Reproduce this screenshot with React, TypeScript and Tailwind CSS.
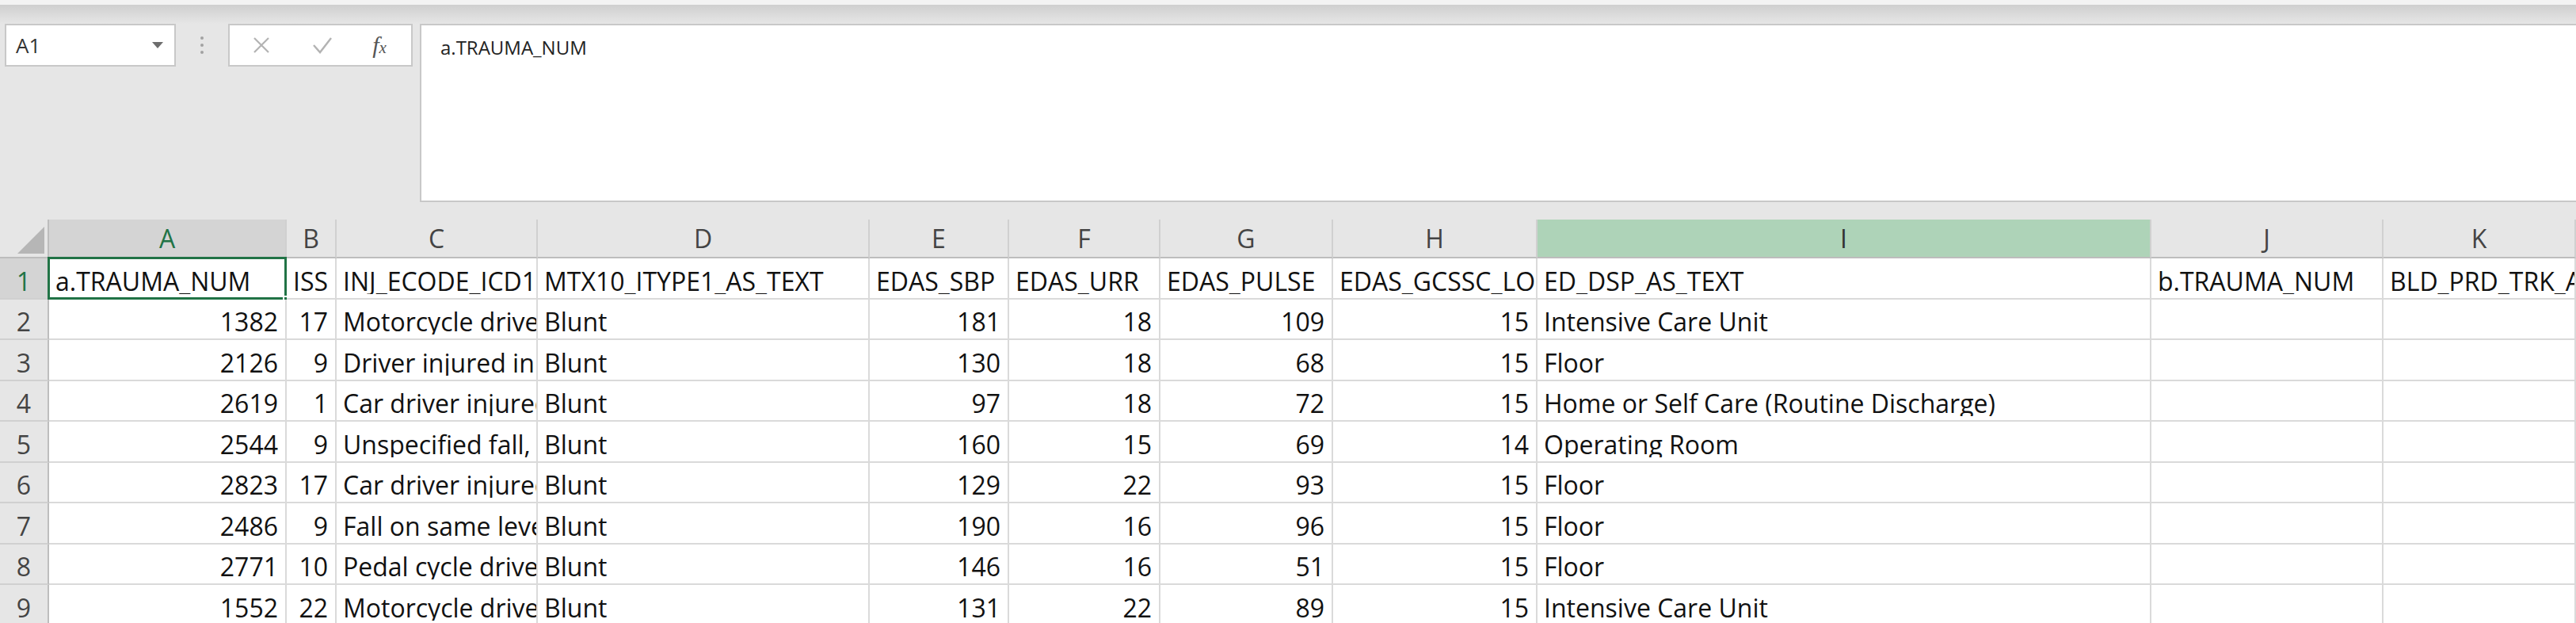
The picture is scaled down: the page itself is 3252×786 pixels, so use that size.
import React from "react";

type Column = {
  letter: string;
  width: string;
};

const columns: Column[] = [
  { letter: "A", width: "w-[300px]" },
  { letter: "B", width: "w-[63px]" },
  { letter: "C", width: "w-[254px]" },
  { letter: "D", width: "w-[419px]" },
  { letter: "E", width: "w-[176px]" },
  { letter: "F", width: "w-[191px]" },
  { letter: "G", width: "w-[218px]" },
  { letter: "H", width: "w-[258px]" },
  { letter: "I", width: "w-[775px]" },
  { letter: "J", width: "w-[293px]" },
  { letter: "K", width: "w-[243px]" },
];

const headerRow = [
  "a.TRAUMA_NUM",
  "ISS",
  "INJ_ECODE_ICD10_AS_TEXT",
  "MTX10_ITYPE1_AS_TEXT",
  "EDAS_SBP",
  "EDAS_URR",
  "EDAS_PULSE",
  "EDAS_GCSSC_LOC",
  "ED_DSP_AS_TEXT",
  "b.TRAUMA_NUM",
  "BLD_PRD_TRK_AS_TEXT",
];

const rows: string[][] = [
  ["1382", "17", "Motorcycle driver injured in collision", "Blunt", "181", "18", "109", "15", "Intensive Care Unit", "", ""],
  ["2126", "9", "Driver injured in collision", "Blunt", "130", "18", "68", "15", "Floor", "", ""],
  ["2619", "1", "Car driver injured in collision", "Blunt", "97", "18", "72", "15", "Home or Self Care (Routine Discharge)", "", ""],
  ["2544", "9", "Unspecified fall, initial encounter", "Blunt", "160", "15", "69", "14", "Operating Room", "", ""],
  ["2823", "17", "Car driver injured in collision", "Blunt", "129", "22", "93", "15", "Floor", "", ""],
  ["2486", "9", "Fall on same level from slipping", "Blunt", "190", "16", "96", "15", "Floor", "", ""],
  ["2771", "10", "Pedal cycle driver injured", "Blunt", "146", "16", "51", "15", "Floor", "", ""],
  ["1552", "22", "Motorcycle driver injured in collision", "Blunt", "131", "22", "89", "15", "Intensive Care Unit", "", ""],
];

const rowHeights = ["h-[49px]", "h-[52px]", "h-[51px]", "h-[52px]", "h-[51px]", "h-[52px]", "h-[51px]", "h-[52px]", "h-[51px]", "h-[52px]"];

const App = () => {
  const renderColumnHeader = (col: Column) => {
    // selected column gets the darker fill, I is highlighted green
    let look = "bg-[#e6e6e6] text-[#444] border-b-2 border-b-[#bdbdbd]";
    if (col.letter === "A") look = "bg-[#d4d4d4] text-[#217346] border-b-2 border-b-[#217346]";
    if (col.letter === "I") look = "bg-[#aed3b8] text-[#333] border-b-2 border-b-[#bdbdbd]";
    return (
      <div
        key={col.letter}
        className={`${col.width} ${look} flex shrink-0 items-center justify-center border-r-2 border-r-[#d0d0d0]`}
      >
        {col.letter}
      </div>
    );
  };

  const renderCell = (col: Column, value: string, rowIndex: number) => {
    const isNumber = /^\d+$/.test(value);
    const isActive = rowIndex === 1 && col.letter === "A";
    return (
      <div
        key={col.letter}
        className={`${col.width} relative flex shrink-0 items-end border-r-2 border-b-2 border-[#dadada] bg-white pb-[5px] ${
          isNumber ? "justify-end pr-[9px]" : "justify-start pl-[8px]"
        }`}
      >
        <span className={`block w-full overflow-hidden whitespace-nowrap ${isNumber ? "text-right" : "text-left"}`}>
          {value}
        </span>
        {isActive && (
          <>
            <div className="absolute -top-[2px] -left-[2px] right-[-2px] bottom-[-2px] border-[3px] border-[#217346]" />
            <div className="absolute right-[-7px] bottom-[-7px] h-[10px] w-[10px] border-2 border-white bg-[#217346]" />
          </>
        )}
      </div>
    );
  };

  const renderRow = (cells: string[], rowIndex: number) => (
    <div key={rowIndex} className={`flex ${rowHeights[rowIndex]}`}>
      <div
        className={`flex w-[62px] shrink-0 items-end justify-center border-b-2 border-b-[#d0d0d0] pb-[5px] ${
          rowIndex === 1
            ? "bg-[#d4d4d4] text-[#217346] border-r-2 border-r-[#217346]"
            : "bg-[#e6e6e6] text-[#444] border-r-2 border-r-[#bdbdbd]"
        }`}
      >
        {rowIndex}
      </div>
      {columns.map((col, i) => renderCell(col, cells[i], rowIndex))}
    </div>
  );

  return (
    <div className="h-[786px] w-[3252px] overflow-hidden bg-[#e6e6e6] font-['Open_Sans',sans-serif] text-[#111]">
      {/* TITLE STRIP */}
      <div className="h-[6px] bg-[#f3f3f3]" />
      <div className="h-[24px] bg-gradient-to-b from-[#cfcfcf] to-[#e6e6e6]" />

      {/* FORMULA BAR */}
      <div className="flex h-[225px] items-start">
        <div className="ml-[6px] flex h-[54px] w-[216px] items-center justify-between border-2 border-[#c8c8c8] bg-white pl-[12px] pr-[14px]">
          <span className="text-[26px] leading-none text-[#333]">A1</span>
          <svg width="14" height="8" viewBox="0 0 14 8">
            <path d="M0 0h14L7 8z" fill="#6d6d6d" />
          </svg>
        </div>
        <div className="flex h-[54px] w-[66px] flex-col items-center justify-center gap-[5px]">
          <span className="h-[4px] w-[4px] rounded-full bg-[#a2a2a2]" />
          <span className="h-[4px] w-[4px] rounded-full bg-[#a2a2a2]" />
          <span className="h-[4px] w-[4px] rounded-full bg-[#a2a2a2]" />
        </div>
        <div className="flex h-[54px] w-[233px] items-center border-2 border-[#c8c8c8] bg-white">
          <div className="flex w-[80px] justify-center">
            <svg width="22" height="22" viewBox="0 0 22 22">
              <path d="M2 2l18 18M20 2L2 20" stroke="#b3b3b3" strokeWidth="2.2" />
            </svg>
          </div>
          <div className="flex w-[74px] justify-center">
            <svg width="26" height="22" viewBox="0 0 26 22">
              <path d="M2 11l8 9L24 2" stroke="#b3b3b3" strokeWidth="2.4" fill="none" />
            </svg>
          </div>
          <div className="flex w-[70px] items-start justify-center font-['Liberation_Serif',serif] text-[30px] italic leading-none text-[#555]">
            <span>f</span>
            <span className="mt-[8px] text-[21px]">x</span>
          </div>
        </div>
        <div className="ml-[9px] h-[225px] flex-1 border-y-2 border-l-2 border-[#c8c8c8] bg-white pl-[24px] pt-[16px]">
          <span className="text-[24px] leading-none text-[#222]">a.TRAUMA_NUM</span>
        </div>
      </div>
      <div className="h-[22px]" />

      {/* SHEET */}
      <div className="text-[32px] leading-none">
        <div className={`flex ${rowHeights[0]}`}>
          <div className="relative w-[62px] shrink-0 border-r-2 border-b-2 border-[#bdbdbd] bg-[#e6e6e6]">
            <svg className="absolute right-[4px] bottom-[4px]" width="34" height="34" viewBox="0 0 34 34">
              <path d="M34 0V34H0z" fill="#b6b6b6" />
            </svg>
          </div>
          {columns.map(renderColumnHeader)}
        </div>
        {renderRow(headerRow, 1)}
        {rows.map((r, i) => renderRow(r, i + 2))}
      </div>
    </div>
  );
};

export default App;
